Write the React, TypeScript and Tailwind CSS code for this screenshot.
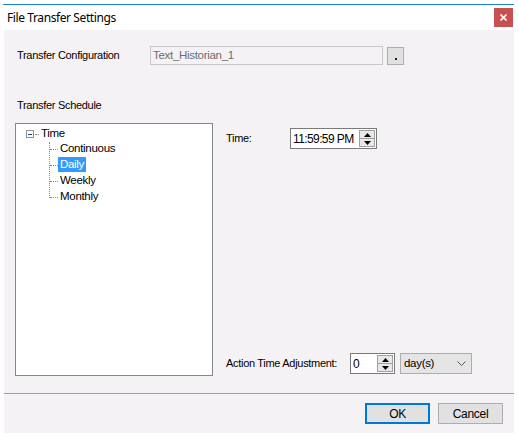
import React from "react";

function Spin() {
  return (
    <div className="flex flex-col w-[16px] h-[17px] border border-[#a0a0a0] bg-[#e8e8e8] shrink-0">
      <div className="flex-1 flex items-center justify-center border-b border-[#a0a0a0]">
        <svg width="7" height="4" viewBox="0 0 7 4"><path d="M0 4 L3.5 0 L7 4 Z" fill="#000" /></svg>
      </div>
      <div className="flex-1 flex items-center justify-center">
        <svg width="7" height="4" viewBox="0 0 7 4"><path d="M0 0 L3.5 4 L7 0 Z" fill="#000" /></svg>
      </div>
    </div>
  );
}

export default function App() {
  const sans = { fontFamily: '"Liberation Sans", Arial, sans-serif' };
  return (
    <div className="w-[519px] h-[438px] bg-white overflow-hidden" style={sans}>
      <div className="ml-[3px] mt-[4px] w-[511px] flex flex-col">
        <div className="h-[1px] bg-[#1883d7]" />
        <div className="h-[25px] bg-white flex items-center justify-between">
          <span
            className="ml-[4px] text-[12px] tracking-[-0.4px] text-black whitespace-nowrap"
            style={{ fontFamily: '"Noto Sans", "Open Sans", sans-serif' }}
          >
            File Transfer Settings
          </span>
          <div className="mr-[1px] w-[19px] h-[19px] bg-[#c75050] flex items-center justify-center">
            <svg width="7" height="7" viewBox="0 0 7 7"><path d="M0.5 0.5 L6.5 6.5 M6.5 0.5 L0.5 6.5" stroke="#fff" strokeWidth="1.6" /></svg>
          </div>
        </div>
        <div className="ml-[1px] h-[403px] bg-[#f5f2f5] flex flex-col text-[11px] tracking-[-0.3px] text-black whitespace-nowrap">
          <div className="mt-[16px] flex items-center h-[19px] pl-[13px]">
            <span className="w-[133px]">Transfer Configuration</span>
            <div className="w-[233px] h-[19px] border border-[#c8c8c8] bg-[#f5f2f5] flex items-center pl-[2px] text-[#6d6d6d] text-[11.5px]">
              Text_Historian_1
            </div>
            <div className="ml-[4px] w-[17px] h-[18px] border border-[#adadad] bg-[#e1e1e1] flex items-end justify-center pb-[4px]">
              <div className="w-[2px] h-[2px] bg-[#3a1020]" />
            </div>
          </div>
          <div className="mt-[33px] pl-[13px] h-[14px] leading-[14px]">Transfer Schedule</div>
          <div className="mt-[11px] flex">
            <div className="ml-[11px] w-[198px] h-[253px] border border-[#828790] bg-white relative">
              <div className="absolute left-[10px] top-[6px] w-[8px] h-[8px] border border-[#919191] bg-white flex items-center justify-center">
                <div className="w-[4px] h-[1px] bg-[#1e3c8c]" />
              </div>
              <div className="absolute left-[19px] top-[10px] w-[4px] border-t border-dotted border-[#8a8a8a]" />
              <div className="absolute left-[25px] top-[2px] text-[11.5px] leading-[14px]">Time</div>
              <div className="absolute left-[33px] top-[18px] h-[56px] border-l border-dotted border-[#8a8a8a]" />
              {[
                { t: "Continuous", y: 25 },
                { t: "Daily", y: 41, sel: true },
                { t: "Weekly", y: 57 },
                { t: "Monthly", y: 73 },
              ].map((it) => (
                <React.Fragment key={it.t}>
                  <div className="absolute left-[34px] w-[8px] border-t border-dotted border-[#8a8a8a]" style={{ top: it.y }} />
                  <div
                    className={
                      "absolute left-[42px] h-[15px] leading-[15px] px-[2px] text-[11.5px] " +
                      (it.sel ? "bg-[#3399ff] text-white" : "text-black")
                    }
                    style={{ top: it.y - 8 }}
                  >
                    {it.t}
                  </div>
                </React.Fragment>
              ))}
            </div>
            <div className="ml-[13px] flex-1 h-[253px] flex flex-col justify-between pt-[5px] pb-[2px]">
              <div className="flex items-center">
                <span className="w-[64px]">Time:</span>
                <div className="w-[87px] h-[21px] border border-[#7a7a7a] bg-white flex items-center justify-between pl-[2px] pr-[1px] text-[12px] tracking-[-0.6px]">
                  <span>11:59:59 PM</span>
                  <Spin />
                </div>
              </div>
              <div className="flex items-center">
                <span className="w-[124px]">Action Time Adjustment:</span>
                <div className="w-[45px] h-[21px] border border-[#7a7a7a] bg-white flex items-center justify-between pl-[2px] pr-[1px] text-[12px]">
                  <span>0</span>
                  <Spin />
                </div>
                <div className="ml-[5px] w-[72px] h-[21px] border border-[#adadad] bg-[#e5e5e5] flex items-center justify-between pl-[3px] pr-[5px] text-[11.5px]">
                  <span>day(s)</span>
                  <svg width="9" height="5" viewBox="0 0 9 5"><path d="M0.5 0.5 L4.5 4.5 L8.5 0.5" stroke="#555" strokeWidth="1" fill="none" /></svg>
                </div>
              </div>
            </div>
          </div>
          <div className="mt-[17px] h-[1px] bg-[#a0a0a0]" />
          <div className="mt-[9px] flex pl-[361px] gap-[8px]">
            <div className="w-[65px] h-[21px] border-2 border-[#0078d7] bg-[#e1e1e1] flex items-center justify-center text-[12px]">OK</div>
            <div className="w-[65px] h-[21px] border border-[#adadad] bg-[#e1e1e1] flex items-center justify-center text-[12px]">Cancel</div>
          </div>
        </div>
      </div>
    </div>
  );
}
